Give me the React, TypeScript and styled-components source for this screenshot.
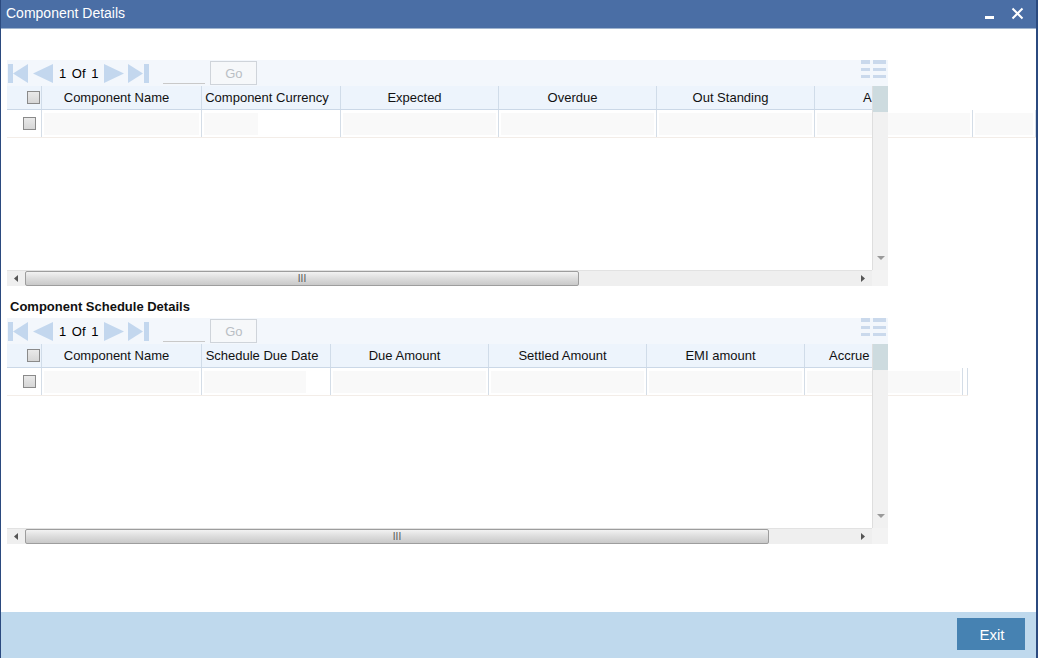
import React from "react";
import styled, { createGlobalStyle } from "styled-components";

const GlobalStyle = createGlobalStyle`
  html, body { margin: 0; padding: 0; background: #ffffff; }
  body { font-family: "Liberation Sans", Arial, sans-serif; overflow: hidden; }
  * { box-sizing: border-box; }
`;

const Window = styled.div`
  width: 1038px;
  height: 658px;
  display: flex;
  flex-direction: column;
  border-left: 1px solid #2b4a7f;
  border-right: 2px solid #2b4a7f;
  background: #ffffff;
  overflow: hidden;
`;

const TitleBar = styled.div`
  height: 29px;
  flex: none;
  display: flex;
  align-items: center;
  justify-content: space-between;
  background: #4a6ea5;
  border-bottom: 1px solid #9fb4cf;
  padding: 0 12px 2px 5px;
  color: #ffffff;
`;

const Title = styled.span`
  font-size: 14px;
`;

const TitleButtons = styled.div`
  display: flex;
  align-items: center;
  gap: 17px;
`;

const Minimize = styled.span`
  display: block;
  width: 9px;
  height: 3px;
  margin-top: 8px;
  background: #ffffff;
`;

const Content = styled.div`
  flex: 1;
  display: flex;
  flex-direction: column;
  padding: 31px 0 0 6px;
  overflow: visible;
`;

const Grid = styled.div`
  width: 881px;
  display: flex;
  flex-direction: column;
`;

const Toolbar = styled.div`
  height: 26px;
  display: flex;
  align-items: center;
  background: #f3f7fc;
  padding-left: 1px;
  font-size: 13px;
  color: #000;
`;

const NavIcon = styled.svg`
  display: block;
  flex: none;
`;

const PageText = styled.span`
  margin: 0 5px 0 5px;
  white-space: nowrap;
  word-spacing: 2px;
`;

const PageInput = styled.span`
  width: 42px;
  height: 22px;
  margin-left: 13px;
  border-bottom: 1px solid #c9c9c9;
`;

const GoButton = styled.span`
  width: 47px;
  height: 24px;
  margin-left: 5px;
  display: flex;
  align-items: center;
  justify-content: center;
  border: 1px solid #cfd4da;
  background: #f6f8fa;
  color: #b9bec4;
  font-size: 13px;
`;

const ToolbarSpacer = styled.span`
  flex: 1;
`;

const ListIcon = styled.svg`
  margin: -6px 2px 0 0;
`;

const Viewport = styled.div`
  position: relative;
  height: 184px;
`;

const HeaderRow = styled.div`
  width: 865px;
  height: 24px;
  display: flex;
  overflow: hidden;
  background: #edf4fc;
  border-bottom: 1px solid #cbd8e7;
`;

const HeadCell = styled.div<{ $w: number; $pl?: number; $left?: boolean }>`
  flex: none;
  width: ${(p) => p.$w}px;
  height: 100%;
  display: flex;
  align-items: center;
  justify-content: ${(p) => (p.$left ? "flex-start" : "center")};
  padding: 0 ${(p) => (p.$left ? 0 : 10)}px 0 ${(p) => p.$pl ?? 0}px;
  border-right: 1px solid #d0dce9;
  font-size: 13px;
  color: #111;
  white-space: nowrap;
`;

const CheckHead = styled.div`
  flex: none;
  width: 35px;
  height: 100%;
  display: flex;
  align-items: center;
  justify-content: flex-end;
  padding-right: 1px;
  border-right: 1px solid #d0dce9;
`;

const DataRow = styled.div`
  display: flex;
  height: 28px;
  border-bottom: 1px solid #f3ede8;
  width: max-content;
`;

const CheckCell = styled.div`
  flex: none;
  width: 35px;
  height: 100%;
  display: flex;
  align-items: center;
  padding-left: 16px;
  border-right: 1px solid #d4dde7;
`;

const DataCell = styled.div<{ $w: number }>`
  flex: none;
  width: ${(p) => p.$w}px;
  height: 100%;
  padding: 3px 2px 2px 2px;
  border-right: 1px solid #d4dde7;
`;

const Fill = styled.div<{ $w?: number }>`
  height: 100%;
  width: ${(p) => (p.$w ? `${p.$w}px` : "100%")};
  background: #f9f9f9;
`;

const Checkbox = styled.span`
  display: block;
  width: 13px;
  height: 13px;
  border: 1px solid #8a8a8a;
  background: linear-gradient(#e9e9e9, #d6d6d6);
`;

const VScroll = styled.div`
  position: absolute;
  top: 0;
  right: 0;
  width: 16px;
  height: 100%;
  display: flex;
  flex-direction: column;
  background: #f1f1f1;
  border-left: 1px solid #dedede;
  z-index: 2;
`;

const VTop = styled.div`
  height: 26px;
  background: #cddbdf;
`;

const VSpacer = styled.div`
  flex: 1;
`;

const VArrow = styled.div`
  height: 14px;
  display: flex;
  justify-content: center;
  align-items: flex-start;
`;

const HScroll = styled.div`
  height: 16px;
  display: flex;
`;

const HTrack = styled.div`
  width: 865px;
  height: 100%;
  display: flex;
  align-items: center;
  background: #efefef;
  border-top: 1px solid #e2e2e2;
`;

const HArrow = styled.div`
  width: 18px;
  height: 100%;
  flex: none;
  display: flex;
  align-items: center;
  justify-content: center;
`;

const Thumb = styled.div`
  height: 15px;
  flex: none;
  display: flex;
  align-items: center;
  justify-content: center;
  border: 1px solid #9d9d9d;
  border-radius: 2px;
  background: linear-gradient(#f2f2f2, #dcdcdc 50%, #c9c9c9);
  font-size: 10px;
  line-height: 1;
  color: #555;
  letter-spacing: 0;
`;

const HGap = styled.div`
  flex: 1;
`;

const Corner = styled.div`
  width: 16px;
  height: 100%;
  background: #f3f3f3;
`;

const SectionLabel = styled.div`
  height: 32px;
  padding: 13px 0 0 3px;
  font-size: 13px;
  font-weight: bold;
  color: #111;
`;

const Footer = styled.div`
  height: 46px;
  flex: none;
  display: flex;
  justify-content: flex-end;
  align-items: flex-start;
  padding: 6px 11px 0 0;
  background: #bfd9ed;
`;

const ExitButton = styled.button`
  width: 68px;
  height: 32px;
  border: none;
  background: #4682b2;
  color: #ffffff;
  font-family: "Liberation Sans", Arial, sans-serif;
  font-size: 15px;
  padding: 0 0 0 2px;
`;

const NAV = "#c3d7ee";

const FirstIcon = () => (
  <NavIcon width="21" height="21" viewBox="0 0 21 21">
    <rect x="0" y="1" width="5" height="19" fill={NAV} />
    <polygon points="20,1 20,20 5,10.5" fill={NAV} />
  </NavIcon>
);
const PrevIcon = () => (
  <NavIcon width="22" height="21" viewBox="0 0 22 21" style={{ marginLeft: 3 }}>
    <polygon points="21,1 21,20 1,10.5" fill={NAV} />
  </NavIcon>
);
const NextIcon = () => (
  <NavIcon width="22" height="21" viewBox="0 0 22 21">
    <polygon points="1,1 1,20 21,10.5" fill={NAV} />
  </NavIcon>
);
const LastIcon = () => (
  <NavIcon width="22" height="21" viewBox="0 0 22 21" style={{ marginLeft: 3 }}>
    <polygon points="0,1 0,20 15,10.5" fill={NAV} />
    <rect x="16" y="1" width="5" height="19" fill={NAV} />
  </NavIcon>
);

const ColumnsIcon = () => (
  <ListIcon width="25" height="20" viewBox="0 0 25 20">
    <rect x="0" y="0" width="9" height="4" fill="#cad9ec" />
    <rect x="12" y="0" width="13" height="4" fill="#cad9ec" />
    <rect x="0" y="8" width="9" height="3" fill="#cad9ec" />
    <rect x="12" y="8" width="13" height="3" fill="#cad9ec" />
    <rect x="0" y="15" width="9" height="3" fill="#cad9ec" />
    <rect x="12" y="15" width="13" height="3" fill="#cad9ec" />
  </ListIcon>
);

type Col = { label: string; w: number; pl?: number; left?: boolean };
type RowCell = { w: number; fill?: number };

const GridBlock: React.FC<{ cols: Col[]; row: RowCell[]; thumb: number }> = ({
  cols,
  row,
  thumb,
}) => (
  <Grid>
    <Toolbar>
      <FirstIcon />
      <PrevIcon />
      <PageText>1 Of 1</PageText>
      <NextIcon />
      <LastIcon />
      <PageInput />
      <GoButton>Go</GoButton>
      <ToolbarSpacer />
      <ColumnsIcon />
    </Toolbar>
    <Viewport>
      <HeaderRow>
        <CheckHead>
          <Checkbox />
        </CheckHead>
        {cols.map((c) => (
          <HeadCell key={c.label} $w={c.w} $pl={c.pl} $left={c.left}>
            {c.label}
          </HeadCell>
        ))}
      </HeaderRow>
      <DataRow>
        <CheckCell>
          <Checkbox />
        </CheckCell>
        {row.map((c, i) => (
          <DataCell key={i} $w={c.w}>
            {c.fill !== 0 && <Fill $w={c.fill} />}
          </DataCell>
        ))}
      </DataRow>
      <VScroll>
        <VTop />
        <VSpacer />
        <VArrow>
          <svg width="8" height="5" viewBox="0 0 8 5">
            <polygon points="0,0 8,0 4,4" fill="#9a9a9a" />
          </svg>
        </VArrow>
      </VScroll>
    </Viewport>
    <HScroll>
      <HTrack>
        <HArrow>
          <svg width="4" height="7" viewBox="0 0 4 7">
            <polygon points="4,0 4,7 0,3.5" fill="#555" />
          </svg>
        </HArrow>
        <Thumb style={{ width: thumb }}>III</Thumb>
        <HGap />
        <HArrow>
          <svg width="4" height="7" viewBox="0 0 4 7">
            <polygon points="0,0 0,7 4,3.5" fill="#555" />
          </svg>
        </HArrow>
      </HTrack>
      <Corner />
    </HScroll>
  </Grid>
);

const cols1: Col[] = [
  { label: "Component Name", w: 160 },
  { label: "Component Currency", w: 139, pl: 2 },
  { label: "Expected", w: 158 },
  { label: "Overdue", w: 158 },
  { label: "Out Standing", w: 158 },
  { label: "A", w: 158, pl: 48, left: true },
];
const row1: RowCell[] = [
  { w: 160 },
  { w: 139, fill: 54 },
  { w: 158 },
  { w: 158 },
  { w: 158 },
  { w: 158 },
  { w: 63 },
];

const cols2: Col[] = [
  { label: "Component Name", w: 160 },
  { label: "Schedule Due Date", w: 129, pl: 2 },
  { label: "Due Amount", w: 158 },
  { label: "Settled Amount", w: 158 },
  { label: "EMI amount", w: 158 },
  { label: "Accrue", w: 158, pl: 24, left: true },
];
const row2: RowCell[] = [
  { w: 160 },
  { w: 129, fill: 102 },
  { w: 158 },
  { w: 158 },
  { w: 158 },
  { w: 158 },
  { w: 5, fill: 0 },
];

export default function App() {
  return (
    <>
      <GlobalStyle />
      <Window>
        <TitleBar>
          <Title>Component Details</Title>
          <TitleButtons>
            <Minimize />
            <svg width="13" height="13" viewBox="0 0 13 13">
              <path d="M1.5 1.5 L11.5 11.5 M11.5 1.5 L1.5 11.5" stroke="#fff" strokeWidth="2" />
            </svg>
          </TitleButtons>
        </TitleBar>
        <Content>
          <GridBlock cols={cols1} row={row1} thumb={554} />
          <SectionLabel>Component Schedule Details</SectionLabel>
          <GridBlock cols={cols2} row={row2} thumb={744} />
        </Content>
        <Footer>
          <ExitButton>Exit</ExitButton>
        </Footer>
      </Window>
    </>
  );
}
